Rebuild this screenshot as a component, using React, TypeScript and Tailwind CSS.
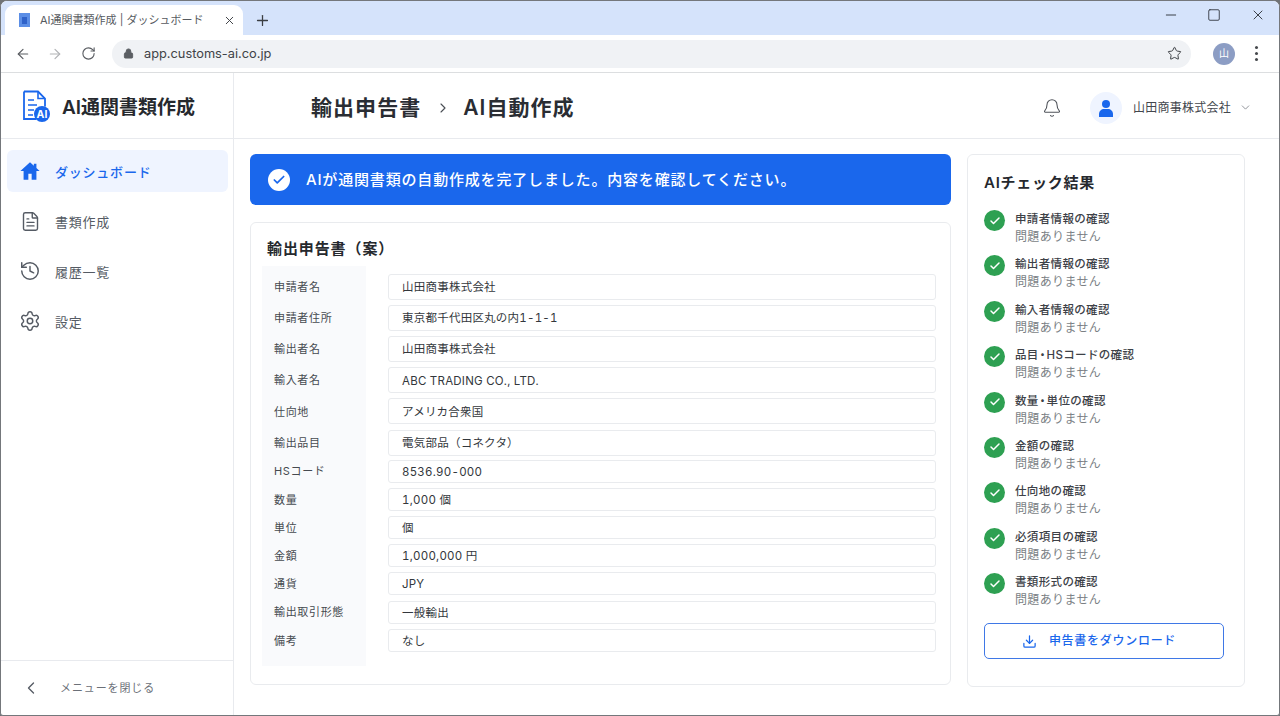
import React from "react";
import { ArrowLeft, ArrowRight, RotateCw, Lock, Star, Bell, ChevronDown, ChevronLeft, ChevronRight, X, Plus, Minus, Square, FileText, History, Settings, Download, Check } from "lucide-react";

const font = { fontFamily: '"Inter","Noto Sans CJK JP","Noto Sans",sans-serif' };

const rows: [string, string, boolean][] = [
  ["申請者名", "山田商事株式会社", true],
  ["申請者住所", "東京都千代田区丸の内1-1-1", true],
  ["輸出者名", "山田商事株式会社", true],
  ["輸入者名", "ABC TRADING CO., LTD.", true],
  ["仕向地", "アメリカ合衆国", true],
  ["輸出品目", "電気部品（コネクタ）", true],
  ["HSコード", "8536.90-000", false],
  ["数量", "1,000 個", false],
  ["単位", "個", false],
  ["金額", "1,000,000 円", false],
  ["通貨", "JPY", false],
  ["輸出取引形態", "一般輸出", false],
  ["備考", "なし", false],
];

const checks = ["申請者情報の確認", "輸出者情報の確認", "輸入者情報の確認", "品目・HSコードの確認", "数量・単位の確認", "金額の確認", "仕向地の確認", "必須項目の確認", "書類形式の確認"];

function Logo() {
  return (
    <svg width="30" height="32" viewBox="0 0 30 32" fill="none">
      <path d="M2 1.500h14l7 7v8M2 1.500V29h12" stroke="#1a67ec" strokeWidth="1.8" />
      <path d="M16 1.500v7h7" stroke="#1a67ec" strokeWidth="1.600" />
      <path d="M6 10h6M6 15h9M6 20h6M6 25h5" stroke="#1a67ec" strokeWidth="1.500" />
      <circle cx="20" cy="24" r="8" fill="#1a67ec" />
      <text x="20" y="28" textAnchor="middle" fontSize="10.500" fontWeight="700" fill="#fff" fontFamily="Inter">AI</text>
    </svg>
  );
}

function HomeIcon() {
  return (
    <svg width="22" height="22" viewBox="0 0 24 24" fill="#1a67ec">
      <path d="M12 2.500 1.500 12H5v9.500h5.200v-6.500h3.600v6.500H19V12h3.500L19 8.800V4h-2.800v2.300z" />
    </svg>
  );
}

function NavItem({ icon, label, active }: { icon: React.ReactNode; label: string; active?: boolean }) {
  return (
    <div className={`h-[42px] flex items-center rounded-md pl-[12px] ${active ? "bg-[#eff4ff] text-[#1a67ec]" : "text-[#555b64]"}`}>
      <span className="w-[22px] flex justify-center">{icon}</span>
      <span className={`ml-[14px] pt-[4px] text-[13px] tracking-[0.06em] ${active ? "font-medium" : ""}`}>{label}</span>
    </div>
  );
}

function CheckLabel({ text }: { text: string }) {
  const parts = text.split("・");
  return (
    <>
      {parts[0]}
      {parts.length > 1 && <span className="-mx-[2px]">・</span>}
      {parts[1]}
    </>
  );
}

export default function App() {
  return (
    <div style={font} className="w-[1280px] h-[716px] overflow-hidden bg-[#6f7276]">
      <div className="w-full h-full bg-white rounded-t-[7px] rounded-b-[3px] border border-[#74777b] flex flex-col overflow-hidden">
        {/* tab strip */}
        <div className="h-[34px] shrink-0 bg-[#d5e3fb] flex items-end relative">
          <div className="ml-[4px] w-[238px] h-[30px] bg-white rounded-t-[9px] flex items-center pl-[14px] pr-[7px]">
            <svg width="12" height="14" viewBox="0 0 12 14"><rect width="11" height="14" fill="#5b8ee6" /><rect x="3" y="4" width="5" height="7" fill="#2f62c9" /></svg>
            <span className="ml-[9px] text-[11px] text-[#565a60] whitespace-nowrap">AI通関書類作成 | ダッシュボード</span>
            <X size={13} className="ml-auto text-[#3e4145]" strokeWidth={1.8} />
          </div>
          <Plus size={17} strokeWidth={1.8} className="ml-[11px] mb-[6px] text-[#3b3e42]" />
          <div className="ml-auto flex items-center text-[#2f343b] pb-[12px] pr-[13px]">
            <Minus size={16} strokeWidth={1.400} />
            <Square size={14} strokeWidth={1.500} className="ml-[28px]" />
            <X size={16} strokeWidth={1.400} className="ml-[29px]" />
          </div>
        </div>
        {/* toolbar */}
        <div className="h-[38px] shrink-0 flex items-center border-b border-[#dcdee0] pl-[14px]">
          <ArrowLeft size={16} strokeWidth={1.8} className="text-[#5b5e63]" />
          <ArrowRight size={16} strokeWidth={1.8} className="ml-[16px] text-[#b1b3b6]" />
          <RotateCw size={15} strokeWidth={1.8} className="ml-[18px] text-[#5b5e63]" />
          <div className="ml-[16px] w-[1079px] h-[28px] rounded-full bg-[#f0f2f5] flex items-center pl-[11px] pr-[9px]">
            <Lock size={11} fill="#5b5e63" className="text-[#5b5e63]" />
            <span className="ml-[10px] text-[12.800px] text-[#3f4347]">app.customs-ai.co.jp</span>
            <Star size={15} strokeWidth={1.600} className="ml-auto text-[#3f4347]" />
          </div>
          <div className="ml-[22px] w-[22px] h-[22px] rounded-full bg-[#8c9dc4] text-white text-[10px] flex items-center justify-center">山</div>
          <div className="ml-[20px] flex flex-col gap-[3px]">
            <span className="w-[3px] h-[3px] rounded-full bg-[#45484c]" />
            <span className="w-[3px] h-[3px] rounded-full bg-[#45484c]" />
            <span className="w-[3px] h-[3px] rounded-full bg-[#45484c]" />
          </div>
        </div>
        {/* app */}
        <div className="flex-1 min-h-0 flex">
          {/* sidebar */}
          <aside className="w-[233px] shrink-0 border-r border-[#e8eaee] flex flex-col">
            <div className="h-[66px] shrink-0 border-b border-[#e8eaee] flex items-center pl-[21px]">
              <Logo />
              <span className="ml-[10px] pt-[5px] text-[19px] font-semibold text-[#26292e] whitespace-nowrap">AI通関書類作成</span>
            </div>
            <nav className="pt-[11px] pl-[6px] pr-[5px] flex flex-col gap-[8px]">
              <NavItem active label="ダッシュボード" icon={<HomeIcon />} />
              <NavItem label="書類作成" icon={<FileText size={21} strokeWidth={1.600} />} />
              <NavItem label="履歴一覧" icon={<History size={22} strokeWidth={1.600} />} />
              <NavItem label="設定" icon={<Settings size={22} strokeWidth={1.600} />} />
            </nav>
            <div className="mt-auto h-[55px] border-t border-[#e8eaee] flex items-center pl-[20px] text-[#555b64]">
              <ChevronLeft size={20} strokeWidth={1.600} />
              <span className="ml-[19px] text-[11px] tracking-[0.08em] text-[#6b7078]">メニューを閉じる</span>
            </div>
          </aside>
          <div className="flex-1 min-w-0 flex flex-col">
            {/* header */}
            <header className="h-[66px] shrink-0 border-b border-[#e8eaee] flex items-center pt-[4px] pl-[77px] pr-[27px]">
              <span className="pt-[1px] text-[21px] font-semibold text-[#2a2d33] tracking-[0.05em]">輸出申告書</span>
              <ChevronRight size={16} strokeWidth={1.700} className="ml-[14px] mr-[12px] text-[#4a4e55]" />
              <span className="pt-[1px] text-[21px] font-semibold text-[#2a2d33] tracking-[0.05em]">AI自動作成</span>
              <Bell size={20} strokeWidth={1.300} className="ml-auto text-[#4f535a]" />
              <div className="ml-[28px] w-[32px] h-[32px] rounded-full bg-[#eff4ff] flex items-center justify-center">
                <svg width="16" height="18" viewBox="0 0 16 18" fill="#1a67ec"><circle cx="8" cy="5" r="4" /><path d="M1 18v-3c0-3 2.500-5 5-5h4c2.500 0 5 2 5 5v3z" /></svg>
              </div>
              <span className="ml-[11px] text-[12px] text-[#43474d] tracking-[0.02em]">山田商事株式会社</span>
              <ChevronDown size={13} strokeWidth={1.500} className="ml-[8px] text-[#7a7e85]" />
            </header>
            <div className="flex-1 min-h-0 flex pl-[16px] pt-[15px] pr-[34px] pb-[28px] gap-[16px]">
              {/* main column */}
              <div className="w-[702px] flex flex-col gap-[17px] pb-[2px]">
                <div className="h-[51px] shrink-0 rounded-md bg-[#1a67ec] flex items-center pl-[18px] text-white">
                  <span className="w-[22px] h-[22px] rounded-full bg-white flex items-center justify-center">
                    <Check size={14} strokeWidth={3} className="text-[#1a67ec]" />
                  </span>
                  <span className="ml-[16px] pt-[1px] text-[15px] font-medium tracking-[0.055em] whitespace-nowrap">AIが通関書類の自動作成を完了しました。内容を確認してください。</span>
                </div>
                <div className="flex-1 rounded-md border border-[#e9ebee] pl-[11px] pr-[14px] flex flex-col">
                  <h2 className="h-[43px] shrink-0 pl-[5px] pt-[14px] text-[15px] leading-[24px] font-semibold text-[#26292e] tracking-[0.06em]">輸出申告書（案）</h2>
                  <div className="flex">
                    <div className="w-[104px] h-[400px] bg-[#f9fafc] shrink-0" />
                    <div className="flex-1 -ml-[104px] pt-[5px] flex flex-col">
                      {rows.map(([k, v, tall], i) => (
                        <div key={k} className={`flex items-center ${tall ? "h-[31.200px]" : "h-[28.200px]"} ${i === 6 ? "-mt-[1px]" : ""}`}>
                          <span className="w-[126px] shrink-0 pl-[12px] pt-[1px] text-[11px] text-[#464a50] tracking-[0.06em]">{k}</span>
                          <div className={`flex-1 ${tall ? "h-[26px]" : "h-[23px]"} rounded-[3px] border border-[#e9ebee] bg-white flex items-center pl-[13px] pt-[2px] text-[11.500px] text-[#33373c] tracking-[0.02em] tabular-nums`}>{v}</div>
                        </div>
                      ))}
                    </div>
                  </div>
                </div>
              </div>
              {/* right card */}
              <div className="w-[278px] rounded-md border border-[#e9ebee] pl-[16px] pr-[20px] flex flex-col">
                <h2 className="pt-[17px] text-[15px] leading-[22px] font-semibold text-[#26292e] tracking-[0.05em]">AIチェック結果</h2>
                <div className="mt-[16px] flex flex-col gap-[7.400px]">
                  {checks.map((c) => (
                    <div key={c} className="flex h-[38px]">
                      <span className="w-[21px] h-[21px] shrink-0 rounded-full bg-[#2ea052] flex items-center justify-center">
                        <Check size={12} strokeWidth={3} className="text-white" />
                      </span>
                      <div className="ml-[10px]">
                        <div className="text-[11.500px] leading-[18px] font-medium text-[#3d4147] tracking-[0.03em]"><CheckLabel text={c} /></div>
                        <div className="text-[12px] leading-[18px] text-[#7b7f85] tracking-[0.03em]">問題ありません</div>
                      </div>
                    </div>
                  ))}
                </div>
                <button className="mt-[12px] w-[240px] h-[36px] rounded-[5px] border border-[#3f78e6] flex items-center justify-center pr-[10px] text-[#1a67ec] text-[12px] font-medium tracking-[0.06em]">
                  <Download size={15} strokeWidth={2} />
                  <span className="ml-[12px]">申告書をダウンロード</span>
                </button>
              </div>
            </div>
          </div>
        </div>
      </div>
    </div>
  );
}
